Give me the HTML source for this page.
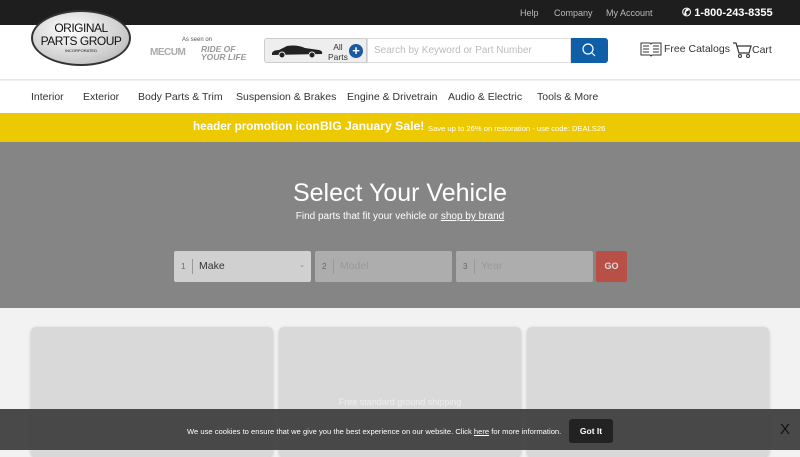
<!DOCTYPE html><html><head><style>
*{margin:0;padding:0;box-sizing:border-box}
body{width:800px;height:450px;overflow:hidden;font-family:"Liberation Sans",sans-serif;background:#f2f2f2;position:relative}
.top{position:absolute;top:0;left:0;width:800px;height:25px;background:#1e1e1e;color:#bbb;font-size:9px;z-index:1}
.top span{position:absolute;top:8px}
.hdr{position:absolute;top:25px;left:0;width:800px;height:55px;background:#fff;border-bottom:1px solid #e6e6e6;z-index:2}
.nav{position:absolute;top:81px;left:0;width:800px;height:32px;background:#fff;font-size:10.5px;color:#333}
.nav span{position:absolute;top:10px;white-space:nowrap}
.promo{position:absolute;top:113px;left:0;width:800px;height:29px;background:#ecc900;color:#fff;font-weight:bold}
.promo span{white-space:nowrap}
.hero{position:absolute;top:142px;left:0;width:800px;height:166px;background:#858585;color:#fff;text-align:center}
.sel{position:absolute;top:251px;height:31px;border-radius:2px;font-size:10.5px}
.sel .n{position:absolute;left:7px;top:11px;font-size:8px;color:#666}
.sel .b{position:absolute;left:18px;top:8px;width:1px;height:15px;background:#999}
.sel .t{position:absolute;left:25px;top:9px}
.card{position:absolute;top:327px;width:242px;height:130px;background:#d9d9d9;border-radius:5px;box-shadow:0 1px 3px rgba(0,0,0,.2)}
.ck{position:absolute;top:409px;left:0;width:800px;height:41px;background:rgba(60,60,60,.93);color:#fff;font-size:7.6px}
</style></head><body>
<div class="top"><span style="left:520px">Help</span><span style="left:554px">Company</span><span style="left:606px">My Account</span><span style="left:682px;top:6px;color:#fff;font-weight:bold;font-size:11px">&#9990; 1-800-243-8355</span></div>
<div class="hdr">
<div style="position:absolute;left:31px;top:-15px;width:100px;height:56px;border-radius:50%;background:radial-gradient(ellipse at 40% 35%,#fff,#c8c8c8 70%,#999);border:2px solid #333;text-align:center;font-size:12px;line-height:13px;padding-top:10px;color:#111;letter-spacing:-0.5px">ORIGINAL<br>PARTS GROUP<div style="font-size:4px;line-height:6px;letter-spacing:0">INCORPORATED</div></div>
<div style="position:absolute;left:182px;top:12px;font-size:6px;color:#555">As seen on</div>
<div style="position:absolute;left:150px;top:22px;font-size:10px;font-weight:bold;color:#aaa;letter-spacing:-0.5px">MECUM</div>
<div style="position:absolute;left:201px;top:20px;font-size:8.5px;font-weight:bold;font-style:italic;color:#999;line-height:8px">RIDE OF<br>YOUR LIFE</div>
<div style="position:absolute;left:264px;top:13px;width:103px;height:25px;background:#eee;border:1px solid #ccc;border-radius:3px 0 0 3px">
<svg style="position:absolute;left:6px;top:6px" width="52" height="13" viewBox="0 0 52 13"><path d="M1 8 Q2 5 8 5 L16 1 Q26 -0.5 34 3 L48 5 Q52 6 51 9 L1 10Z" fill="#222"/><circle cx="11" cy="10" r="3" fill="#222" stroke="#eee"/><circle cx="41" cy="10" r="3" fill="#222" stroke="#eee"/></svg>
<div style="position:absolute;left:63px;top:3px;font-size:8.5px;color:#333;text-align:center;line-height:10px">All<br>Parts</div>
<div style="position:absolute;left:84px;top:5px;width:14px;height:14px;border-radius:50%;background:#1a5aa0;color:#fff;font-size:13px;line-height:13px;text-align:center;font-weight:bold">+</div></div>
<div style="position:absolute;left:367px;top:13px;width:204px;height:25px;border:1px solid #ddd;font-size:10px;color:#bbb;padding:6px 6px">Search by Keyword or Part Number</div>
<div style="position:absolute;left:571px;top:13px;width:37px;height:25px;background:#0f5ea8;border-radius:0 3px 3px 0"><svg width="37" height="25"><circle cx="17" cy="11" r="5" fill="none" stroke="#fff" stroke-width="1.2"/><path d="M21 15 L24 18" stroke="#fff" stroke-width="1.2"/></svg></div>
<svg style="position:absolute;left:640px;top:17px" width="22" height="15" viewBox="0 0 22 15"><path d="M1 1 H10 L11 2 L12 1 H21 V13 H12 L11 14 L10 13 H1Z" fill="none" stroke="#333"/><path d="M3 4H9M3 7H9M3 10H9M13 4H19M13 7H19M13 10H19" stroke="#333"/></svg>
<div style="position:absolute;left:664px;top:18px;font-size:10.5px;color:#333">Free Catalogs</div>
<svg style="position:absolute;left:733px;top:17px" width="19" height="17" viewBox="0 0 19 17"><path d="M0 1H3L6 11H16L18 4H4" fill="none" stroke="#333" stroke-width="1.2"/><circle cx="7" cy="14" r="1.5" fill="none" stroke="#333"/><circle cx="15" cy="14" r="1.5" fill="none" stroke="#333"/></svg>
<div style="position:absolute;left:752px;top:19px;font-size:10.5px;color:#333">Cart</div>
</div>
<div class="nav"><span style="left:31px">Interior</span><span style="left:83px">Exterior</span><span style="left:138px">Body Parts &amp; Trim</span><span style="left:236px">Suspension &amp; Brakes</span><span style="left:347px">Engine &amp; Drivetrain</span><span style="left:448px">Audio &amp; Electric</span><span style="left:537px">Tools &amp; More</span></div>
<div class="promo"><span style="position:absolute;left:193px;top:7px;font-size:11.7px">header promotion icon</span><span style="position:absolute;left:320px;top:6px;font-size:12.2px">BIG January Sale!</span><span style="position:absolute;left:428px;top:11px;font-size:7.6px;font-weight:normal">Save up to 26% on restoration - use code: DEALS26</span></div>
<div class="hero"><div style="position:absolute;top:37px;width:800px;font-size:25px">Select Your Vehicle</div><div style="position:absolute;top:69px;width:800px;font-size:10px">Find parts that fit your vehicle or <u>shop by brand</u></div></div>
<div class="sel" style="left:174px;width:137px;background:#d0d0d0;color:#333"><span class="n">1</span><span class="b"></span><span class="t">Make</span><span style="position:absolute;right:6px;top:10px;font-size:7px;color:#888">&#8964;</span></div>
<div class="sel" style="left:315px;width:137px;background:#adadad;color:#999"><span class="n">2</span><span class="b"></span><span class="t">Model</span></div>
<div class="sel" style="left:456px;width:137px;background:#adadad;color:#999"><span class="n">3</span><span class="b"></span><span class="t">Year</span></div>
<div class="sel" style="left:596px;width:31px;background:#b85048;color:#ddd;font-weight:bold;font-size:9px;text-align:center;line-height:31px">GO</div>
<div class="card" style="left:31px"></div><div class="card" style="left:279px"></div><div class="card" style="left:527px"></div>
<div style="position:absolute;top:397px;left:0;width:800px;text-align:center;font-size:9px;color:#eee">Free standard ground shipping</div>
<div class="ck"><span style="position:absolute;left:187px;top:18px;white-space:nowrap">We use cookies to ensure that we give you the best experience on our website. Click <u>here</u> for more information.</span>
<div style="position:absolute;left:569px;top:10px;width:44px;height:24px;background:#222;border-radius:3px;font-weight:bold;text-align:center;line-height:24px;font-size:8.5px">Got It</div>
<span style="position:absolute;left:780px;top:12px;font-size:15px;color:#111">X</span></div>
</body></html>
